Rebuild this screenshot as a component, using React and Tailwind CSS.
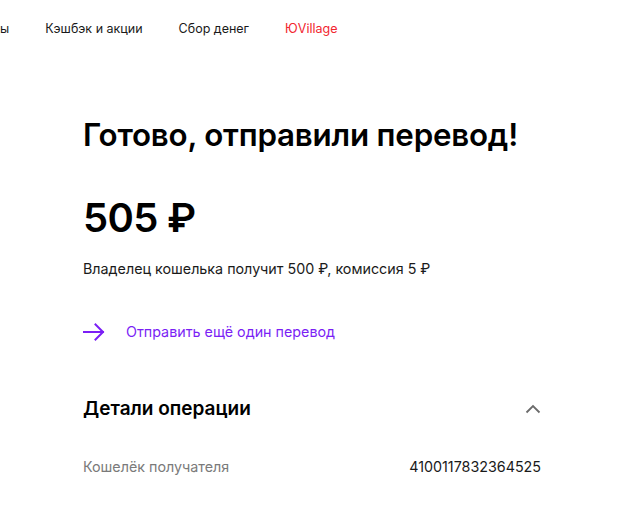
import React from "react";

const navItems = [
  { label: "Переводы", className: "text-[#1a1a1a]" },
  { label: "Кэшбэк и акции", className: "text-[#1a1a1a]" },
  { label: "Сбор денег", className: "text-[#1a1a1a]" },
  { label: "ЮVillage", className: "text-[#f2262f]" },
];

const App = () => {
  return (
    <div
      className="w-[620px] h-[512px] overflow-hidden bg-white text-black"
      style={{ fontFamily: "Inter, 'Noto Sans', sans-serif" }}
    >
      {/* Top navigation (scrolled, first item clipped) */}
      <div className="h-[59px] overflow-hidden">
        <div className="flex items-center gap-[36px] h-full -ml-[54px] text-[12.5px] whitespace-nowrap">
          {navItems.map((item) => (
            <span key={item.label} className={item.className}>
              {item.label}
            </span>
          ))}
        </div>
      </div>

      <div className="w-[458px] ml-[83px]">
        {/* Title */}
        <h1 className="mt-[56px] text-[31.3px] leading-[40px] font-semibold tracking-[-0.2px]">
          Готово, отправили перевод!
        </h1>

        {/* Amount */}
        <div className="mt-[39px] text-[40px] leading-[48px] font-semibold tracking-[-0.7px]">
          505 ₽
        </div>
        <p className="mt-[17px] text-[14.3px] leading-[20px] text-[#1a1a1a]">
          Владелец кошелька получит 500 ₽, комиссия 5 ₽
        </p>

        {/* Repeat link */}
        <a className="mt-[43px] flex items-center gap-[21px] text-[#7b1ff5] text-[14.3px] leading-[20px]">
          <svg width="22" height="18" viewBox="0 0 22 18" fill="none">
            <path
              d="M1 9h19M12.5 1.5 20 9l-7.5 7.5"
              stroke="#7b1ff5"
              strokeWidth="2"
              strokeLinecap="square"
            />
          </svg>
          <span>Отправить ещё один перевод</span>
        </a>

        {/* Operation details */}
        <div className="mt-[53px] flex items-center justify-between">
          <h2 className="text-[19px] leading-[28px] font-semibold">
            Детали операции
          </h2>
          <svg width="16" height="10" viewBox="0 0 16 10" fill="none">
            <path d="M1.5 8.5 8 2l6.5 6.5" stroke="#6b6b6b" strokeWidth="1.8" />
          </svg>
        </div>

        <div className="mt-[34px] flex items-center justify-between text-[14.3px] leading-[20px]">
          <span className="text-[#7a7a7a]">Кошелёк получателя</span>
          <span className="text-[#1a1a1a]">4100117832364525</span>
        </div>
      </div>
    </div>
  );
};

export default App;
